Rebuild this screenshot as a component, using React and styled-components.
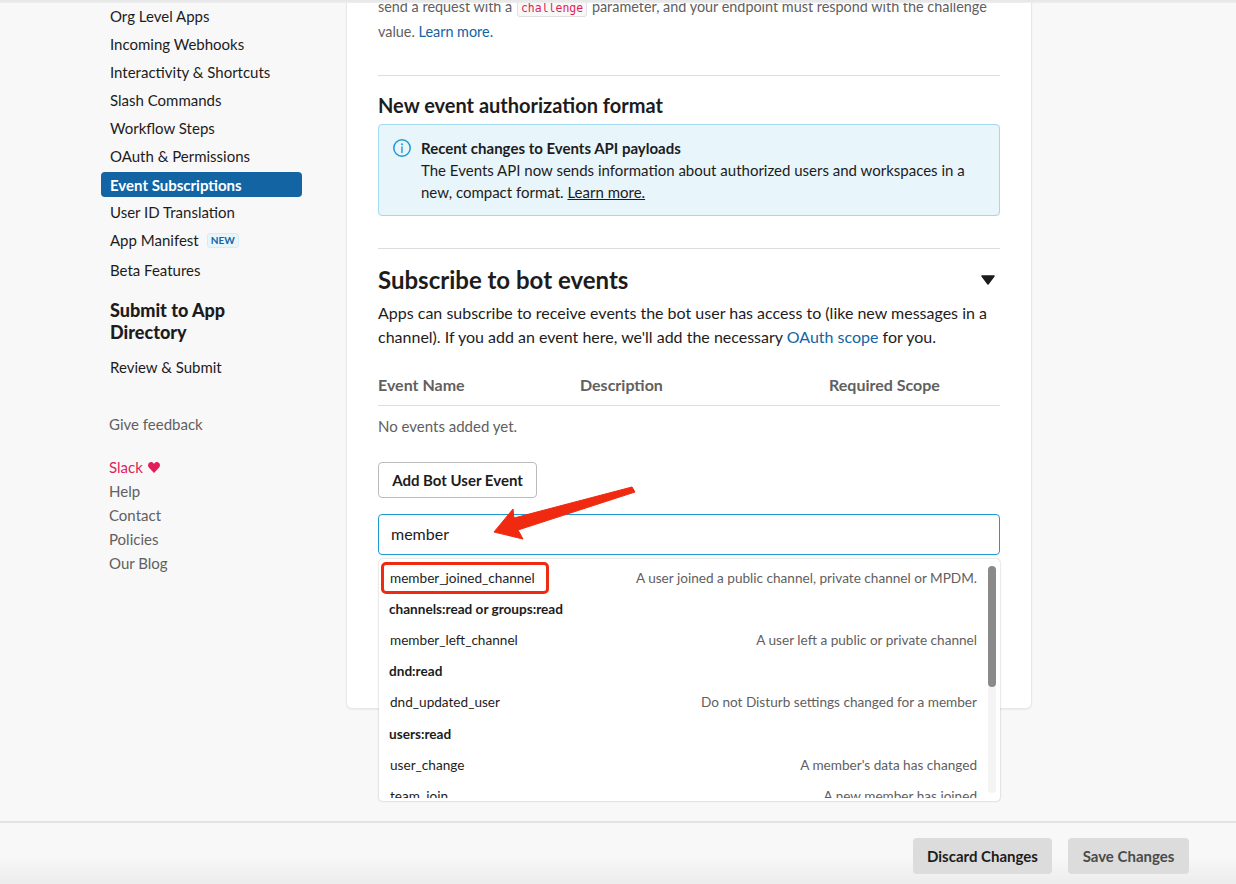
import React from "react";
import styled, { createGlobalStyle } from "styled-components";

// global
const GlobalStyle = createGlobalStyle`
	html, body {
		margin: 0;
		height: 100%;
		overflow: hidden;
	}
	body {
		font-family: Lato, "Open Sans", sans-serif;
		color: #1d1c1d;
		background: #f8f8f8;
	}
	* {
		box-sizing: border-box;
	}
`;

// layout
const Page = styled.div`
	height: 884px;
	display: flex;
	flex-direction: column;
`;

const TopShadow = styled.div`
	position: relative;
	z-index: 1;
	height: 3px;
	flex: none;
	background: linear-gradient(180deg, #e6e6e6 0%, #eeeeee 100%);
`;

const Body = styled.div`
	flex: 1;
	min-height: 0;
	display: flex;
	overflow: hidden;
`;

// sidebar
const Sidebar = styled.nav`
	width: 346px;
	flex: none;
	margin-top: -1px;
	padding-left: 101px;
`;

const NavItem = styled.div`
	width: 201px;
	height: ${(p) => (p.$tall ? "32px" : "28px")};
	margin-top: ${(p) => (p.$active ? "2px" : "0")};
	margin-bottom: ${(p) => (p.$active ? "1px" : "0")};
	${(p) => p.$active && "height: 25px;"}
	padding-left: 9px;
	display: flex;
	align-items: center;
	gap: 8px;
	font-size: 15px;
	font-weight: ${(p) => (p.$active ? 700 : 400)};
	color: ${(p) => (p.$active ? "#fff" : "#1d1c1d")};
	background: ${(p) => (p.$active ? "#1264a3" : "transparent")};
	border-radius: 4px;
`;

const NewBadge = styled.span`
	height: 15px;
	padding: 0 3px;
	display: inline-flex;
	align-items: center;
	font-size: 10px;
	font-weight: 700;
	color: #1264a3;
	background: #e8f5fa;
	border: 1px solid #d5ecf6;
	border-radius: 3px;
`;

const NavHeading = styled.h3`
	margin: 13px 0 10px;
	padding-left: 9px;
	width: 160px;
	font-size: 18px;
	line-height: 22px;
	font-weight: 900;
`;

const SecondaryLinks = styled.div`
	margin-top: ${(p) => p.$gap}px;
	padding-left: 8px;
	font-size: 15px;
	line-height: 24px;
	color: #616061;
`;

const SlackLine = styled.div`
	display: flex;
	align-items: center;
	gap: 5px;
	color: #e01e5a;
`;

// main card
const Main = styled.main`
	width: 686px;
	flex: none;
	align-self: flex-start;
`;

// the card is scrolled, its top edge sits above the fold
const Card = styled.section`
	margin-top: -8px;
	height: 714px;
	padding: 0 31px;
	background: #fff;
	border: 1px solid #e8e8e8;
	border-top: 0;
	border-radius: 0 0 6px 6px;
	box-shadow: 0 1px 2px rgba(0, 0, 0, 0.06);
`;

const IntroText = styled.p`
	margin: 0;
	font-size: 14.4px;
	line-height: 24px;
	color: #616061;
`;

const InlineCode = styled.code`
	padding: 1px 3px;
	margin: 0 1px;
	font-family: "DejaVu Sans Mono", "Liberation Mono", monospace;
	font-size: 11.5px;
	color: #e01e5a;
	background: #f8f8f8;
	border: 1px solid #e0e0e0;
	border-radius: 3px;
`;

const BlueLink = styled.a`
	color: #1264a3;
`;

const Rule = styled.hr`
	margin: ${(p) => p.$top}px 0 0;
	border: 0;
	border-top: 1px solid #ddd;
`;

const SubHeading = styled.h3`
	margin: 16px 0 5px;
	font-size: 20px;
	line-height: 27px;
	font-weight: 700;
`;

const InfoBanner = styled.div`
	height: 92px;
	padding: 12px 13px;
	display: flex;
	gap: 9px;
	background: #e8f5fa;
	border: 1px solid #a5d8ec;
	border-radius: 4px;
	font-size: 15px;
	line-height: 22px;
`;

const BannerIcon = styled.svg`
	flex: none;
	width: 20px;
	height: 20px;
	margin-top: 1px;
`;

const BannerText = styled.div`
	strong {
		display: block;
		font-weight: 700;
	}
	u {
		cursor: pointer;
	}
`;

const SectionHeader = styled.div`
	margin-top: 14px;
	display: flex;
	align-items: center;
	justify-content: space-between;
	padding-right: 5px;
`;

const SectionTitle = styled.h2`
	margin: 0;
	font-size: 24px;
	line-height: 34px;
	font-weight: 700;
`;

const Lead = styled.p`
	margin: 4px 0 0;
	font-size: 16px;
	line-height: 24px;
`;

const TableHead = styled.div`
	margin-top: 14px;
	height: 43px;
	display: grid;
	grid-template-columns: 202px 249px 1fr;
	align-items: center;
	border-bottom: 1px solid #ddd;
	font-size: 16px;
	font-weight: 700;
	color: #616061;
`;

const EmptyNote = styled.p`
	margin: 10px 0 0;
	font-size: 15px;
	line-height: 20px;
	color: #616061;
`;

const OutlineButton = styled.button`
	display: block;
	margin-top: 26px;
	width: 159px;
	height: 36px;
	padding: 0;
	font-family: inherit;
	font-size: 15px;
	font-weight: 700;
	color: #1d1c1d;
	background: #fff;
	border: 1px solid #bbb;
	border-radius: 4px;
`;

const SearchWrap = styled.div`
	position: relative;
	margin-top: 16px;
`;

const SearchInput = styled.div`
	height: 41px;
	padding: 0 12px 2px;
	display: flex;
	align-items: center;
	font-size: 16px;
	border: 1px solid #1d9bd1;
	border-radius: 4px;
`;

const Arrow = styled.svg`
	position: absolute;
	z-index: 2;
	left: 110px;
	top: -30px;
	width: 152px;
	height: 60px;
`;

// dropdown
const Dropdown = styled.div`
	position: absolute;
	left: 1px;
	right: 0;
	top: 45px;
	height: 242px;
	overflow: hidden;
	background: #fff;
	border-radius: 4px;
	box-shadow: 0 0 2px rgba(0, 0, 0, 0.3);
`;

const OptionList = styled.div`
	height: 239px;
	padding-top: 3px;
	overflow: hidden;
`;

const Option = styled.div`
	position: relative;
	height: 31.2px;
	padding: 0 23px 0 ${(p) => (p.$group ? "10px" : "11px")};
	display: flex;
	align-items: center;
	justify-content: space-between;
	font-size: 13.6px;
	font-weight: ${(p) => (p.$group ? 700 : 400)};

	${(p) =>
		p.$marked &&
		`&::before {
			content: "";
			position: absolute;
			box-sizing: border-box;
			left: 2px;
			top: 0;
			width: 168px;
			height: 32px;
			border: 3px solid #f02a10;
			border-radius: 5px;
		}`}
`;

const OptionHint = styled.span`
	color: #616061;
`;

const ScrollTrack = styled.div`
	position: absolute;
	right: 4px;
	top: 7px;
	bottom: 8px;
	width: 8px;
	background: #f4f4f4;
	border-radius: 4px;
`;

const ScrollThumb = styled.div`
	height: 121px;
	background: #8a8a8a;
	border-radius: 4px;
`;

// footer
const Footer = styled.footer`
	height: 63px;
	flex: none;
	padding: 15px 47px 0 0;
	display: flex;
	justify-content: flex-end;
	gap: 16px;
	border-top: 2px solid #e4e4e4;
	background: linear-gradient(180deg, #f8f8f8 0%, #f8f8f8 55%, #ececec 100%);
`;

const FooterButton = styled.button`
	height: 36px;
	width: ${(p) => p.$width}px;
	padding: 0;
	font-family: inherit;
	font-size: 15px;
	font-weight: 700;
	color: ${(p) => (p.$muted ? "#4a4a4a" : "#1d1c1d")};
	background: #dcdcdc;
	border: 0;
	border-radius: 4px;
`;

const navTop = [
	"Org Level Apps",
	"Incoming Webhooks",
	"Interactivity & Shortcuts",
	"Slash Commands",
	"Workflow Steps",
	"OAuth & Permissions",
];

const options = [
	{ name: "member_joined_channel", hint: "A user joined a public channel, private channel or MPDM.", marked: true },
	{ group: "channels:read or groups:read" },
	{ name: "member_left_channel", hint: "A user left a public or private channel" },
	{ group: "dnd:read" },
	{ name: "dnd_updated_user", hint: "Do not Disturb settings changed for a member" },
	{ group: "users:read" },
	{ name: "user_change", hint: "A member's data has changed" },
	{ name: "team_join", hint: "A new member has joined" },
];

export default function App() {
	return (
		<Page>
			<GlobalStyle />
			<TopShadow />
			<Body>
				<Sidebar>
					{navTop.map((label) => (
						<NavItem key={label}>{label}</NavItem>
					))}
					<NavItem $active>Event Subscriptions</NavItem>
					<NavItem>User ID Translation</NavItem>
					<NavItem>
						App Manifest <NewBadge>NEW</NewBadge>
					</NavItem>
					<NavItem $tall>Beta Features</NavItem>
					<NavHeading>Submit to App Directory</NavHeading>
					<NavItem>Review &amp; Submit</NavItem>
					<SecondaryLinks $gap={31}>Give feedback</SecondaryLinks>
					<SecondaryLinks $gap={19}>
						<SlackLine>
							Slack
							<svg width="12" height="11" viewBox="0 0 12 11">
								<path
									d="M6 11 1 5.8C-.4 4.2-.2 1.9 1.2.8 2.7-.4 4.8 0 6 1.9 7.2 0 9.3-.4 10.8.8c1.4 1.1 1.6 3.4.2 5z"
									fill="#e01e5a"
								/>
							</svg>
						</SlackLine>
						<div>Help</div>
						<div>Contact</div>
						<div>Policies</div>
						<div>Our Blog</div>
					</SecondaryLinks>
				</Sidebar>
				<Main>
					<Card>
						<IntroText>
							send a request with a <InlineCode>challenge</InlineCode> parameter, and your endpoint must
							respond with the challenge value. <BlueLink>Learn more.</BlueLink>
						</IntroText>
						<Rule $top={31} />
						<SubHeading>New event authorization format</SubHeading>
						<InfoBanner>
							<BannerIcon viewBox="0 0 20 20" fill="none">
								<circle cx="10" cy="10" r="8.2" stroke="#1d9bd1" strokeWidth="1.5" />
								<circle cx="10" cy="6.3" r="1" fill="#1d9bd1" />
								<path d="M10 9v5.5" stroke="#1d9bd1" strokeWidth="1.4" strokeLinecap="round" />
							</BannerIcon>
							<BannerText>
								<strong>Recent changes to Events API payloads</strong>
								The Events API now sends information about authorized users and workspaces in a new,
								compact format. <u>Learn more.</u>
							</BannerText>
						</InfoBanner>
						<Rule $top={32} />
						<SectionHeader>
							<SectionTitle>Subscribe to bot events</SectionTitle>
							<svg width="14" height="10" viewBox="0 0 14 10">
								<path d="M1 1h12L7 9z" fill="#1d1c1d" stroke="#1d1c1d" strokeWidth="1.5" strokeLinejoin="round" />
							</svg>
						</SectionHeader>
						<Lead>
							Apps can subscribe to receive events the bot user has access to (like new messages in a
							channel). If you add an event here, we'll add the necessary <BlueLink>OAuth scope</BlueLink> for
							you.
						</Lead>
						<TableHead>
							<span>Event Name</span>
							<span>Description</span>
							<span>Required Scope</span>
						</TableHead>
						<EmptyNote>No events added yet.</EmptyNote>
						<OutlineButton>Add Bot User Event</OutlineButton>
						<SearchWrap>
							<SearchInput>member</SearchInput>
							<Arrow viewBox="0 0 152 60">
								<polygon
									points="6,48 25,25 26,34 144,3 147,8 30,46 35,55"
									fill="#f02a10"
									stroke="#f02a10"
									strokeWidth="1"
									strokeLinejoin="round"
								/>
							</Arrow>
							<Dropdown>
								<OptionList>
									{options.map((o) =>
										o.group ? (
											<Option key={o.group} $group>
												{o.group}
											</Option>
										) : (
											<Option key={o.name} $marked={o.marked}>
												<span>{o.name}</span>
												<OptionHint>{o.hint}</OptionHint>
											</Option>
										)
									)}
								</OptionList>
								<ScrollTrack>
									<ScrollThumb />
								</ScrollTrack>
							</Dropdown>
						</SearchWrap>
					</Card>
				</Main>
			</Body>
			<Footer>
				<FooterButton $width={139}>Discard Changes</FooterButton>
				<FooterButton $width={121} $muted>
					Save Changes
				</FooterButton>
			</Footer>
		</Page>
	);
}
